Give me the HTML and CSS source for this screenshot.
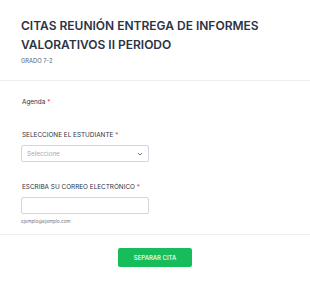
FILE: index.html
```html
<!DOCTYPE html>
<html lang="es">
<head>
<meta charset="utf-8">
<link rel="stylesheet" href="styles.css">
</head>
<body>
<div class="form">
  <header class="header">
    <h1 class="title">CITAS REUNIÓN ENTREGA DE INFORMES VALORATIVOS II PERIODO</h1>
    <div class="subtitle">GRADO 7-2</div>
  </header>
  <section class="fields">
    <div class="field field-agenda">
      <label class="label">Agenda <span class="req">*</span></label>
    </div>
    <div class="field field-select">
      <label class="label">SELECCIONE EL ESTUDIANTE <span class="req">*</span></label>
      <div class="select">
        <span class="placeholder">Seleccione</span>
        <svg class="chev" width="6" height="4" viewBox="0 0 6 4"><path d="M1 1 L3 3 L5 1" fill="none" stroke="#6b7280" stroke-width="1"/></svg>
      </div>
    </div>
    <div class="field field-email">
      <label class="label">ESCRIBA SU CORREO ELECTRÓNICO <span class="req">*</span></label>
      <div class="input"></div>
      <div class="sublabel">ejemplo@ejemplo.com</div>
    </div>
  </section>
  <footer class="actions">
    <button class="submit">SEPARAR CITA</button>
  </footer>
</div>
</body>
</html>
```
FILE: styles.css
```css
html, body {
  margin: 0;
  padding: 0;
  background: #ffffff;
}
body {
  font-family: Inter, "Noto Sans", sans-serif;
  color: #2c3345;
}
.form {
  width: 310px;
}
.header {
  padding: 17px 21px 0 21px;
  height: 63px;
  border-bottom: 1px solid #eceef3;
}
.title {
  margin: 0;
  font-size: 12px;
  line-height: 18.5px;
  font-weight: 600;
  color: #2c3345;
  letter-spacing: 0;
}
.subtitle {
  margin-top: 3px;
  font-size: 5.8px;
  line-height: 8px;
  color: #5c6170;
}
.fields {
  padding: 0 21px 0 21px;
  border-bottom: 1px solid #eceef3;
}
.field {
  display: flex;
  flex-direction: column;
}
.label {
  font-size: 6.4px;
  line-height: 8px;
  font-weight: 400;
  color: #2c3345;
  padding-left: 1px;
}
.req {
  color: #f23a3c;
}
.field-agenda {
  padding-top: 17px;
}
.field-select {
  padding-top: 25px;
}
.field-select .label {
  margin-bottom: 6px;
}
.select {
  width: 128px;
  height: 17px;
  box-sizing: border-box;
  border: 1px solid #d3d6e2;
  border-radius: 2px;
  display: flex;
  align-items: center;
  justify-content: space-between;
  padding: 0 5px 0 5px;
}
.placeholder {
  font-size: 6.3px;
  color: #a3a8b5;
}
.chev {
  display: block;
}
.field-email {
  padding-top: 21px;
  padding-bottom: 9px;
}
.field-email .label {
  margin-bottom: 6px;
}
.input {
  width: 128px;
  height: 17px;
  box-sizing: border-box;
  border: 1px solid #d3d6e2;
  border-radius: 2px;
}
.sublabel {
  margin-top: 5px;
  font-size: 4.6px;
  line-height: 6px;
  color: #6f7688;
}
.actions {
  display: flex;
  justify-content: center;
  padding-top: 13px;
}
.submit {
  width: 74px;
  height: 19px;
  border: 0;
  border-radius: 2px;
  background: #18bd5b;
  color: #ffffff;
  font-family: Inter, "Noto Sans", sans-serif;
  font-size: 6px;
  font-weight: 500;
  padding: 0;
}
```
